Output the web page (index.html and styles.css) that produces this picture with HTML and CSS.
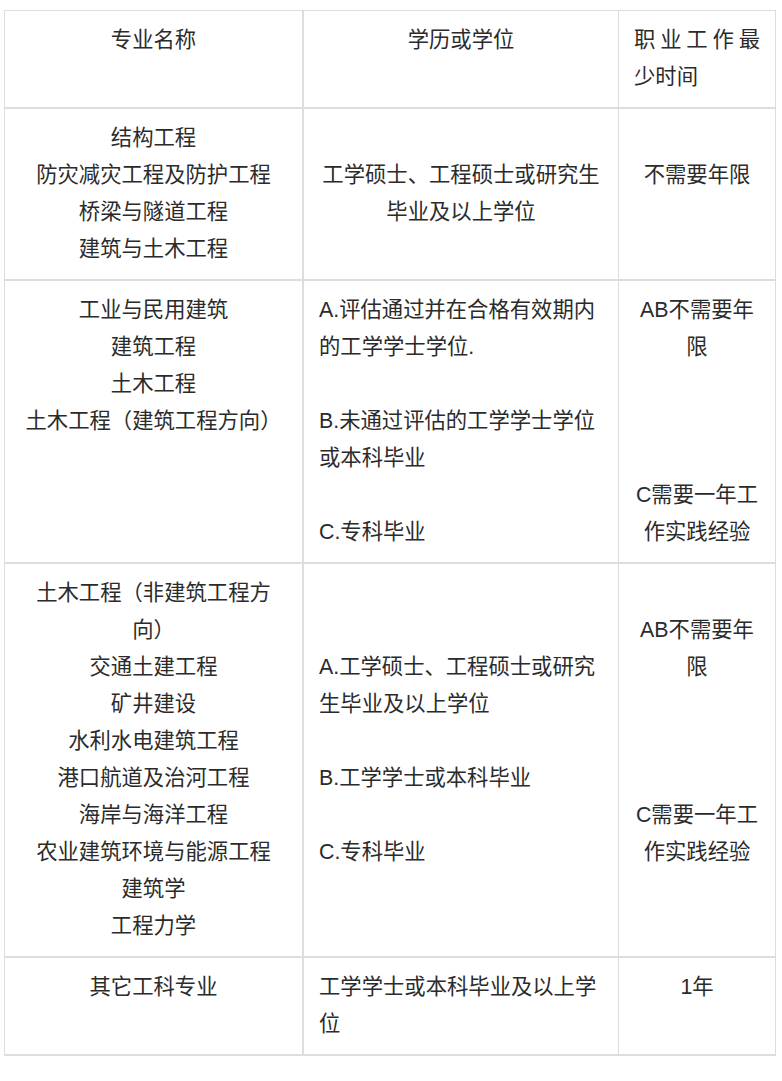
FILE: index.html
```html
<!DOCTYPE html>
<html lang="zh-CN">
<head>
<meta charset="utf-8">
<title>专业与学历要求</title>
<link rel="stylesheet" href="styles.css">
</head>
<body>
<table class="req">
  <colgroup>
    <col class="c1">
    <col class="c2">
    <col class="c3">
  </colgroup>
  <thead>
    <tr>
      <th class="h1">专业名称</th>
      <th class="h2">学历或学位</th>
      <th class="h3">职业工作最少时间</th>
    </tr>
  </thead>
  <tbody>
    <tr>
      <td class="major top">
        <div>结构工程</div>
        <div>防灾减灾工程及防护工程</div>
        <div>桥梁与隧道工程</div>
        <div>建筑与土木工程</div>
      </td>
      <td class="degree center">工学硕士、工程硕士或研究生毕业及以上学位</td>
      <td class="years">
        <div>不需要年限</div>
        <div class="blank"></div>
      </td>
    </tr>
    <tr>
      <td class="major top">
        <div>工业与民用建筑</div>
        <div>建筑工程</div>
        <div>土木工程</div>
        <div>土木工程（建筑工程方向）</div>
      </td>
      <td class="degree">
        <div>A.评估通过并在合格有效期内的工学学士学位.</div>
        <div class="blank"></div>
        <div>B.未通过评估的工学学士学位或本科毕业</div>
        <div class="blank"></div>
        <div>C.专科毕业</div>
      </td>
      <td class="years">
        <div>AB不需要年限</div>
        <div class="blank"></div>
        <div class="blank"></div>
        <div class="blank"></div>
        <div>C需要一年工作实践经验</div>
      </td>
    </tr>
    <tr>
      <td class="major">
        <div>土木工程（非建筑工程方<br>向）</div>
        <div>交通土建工程</div>
        <div>矿井建设</div>
        <div>水利水电建筑工程</div>
        <div>港口航道及治河工程</div>
        <div>海岸与海洋工程</div>
        <div>农业建筑环境与能源工程</div>
        <div>建筑学</div>
        <div>工程力学</div>
      </td>
      <td class="degree">
        <div>A.工学硕士、工程硕士或研究生毕业及以上学位</div>
        <div class="blank"></div>
        <div>B.工学学士或本科毕业</div>
        <div class="blank"></div>
        <div>C.专科毕业</div>
      </td>
      <td class="years">
        <div>AB不需要年限</div>
        <div class="blank"></div>
        <div class="blank"></div>
        <div class="blank"></div>
        <div>C需要一年工作实践经验</div>
        <div class="blank"></div>
      </td>
    </tr>
    <tr class="last">
      <td class="major top">其它工科专业</td>
      <td class="degree top">工学学士或本科毕业及以上学位</td>
      <td class="years top">1年</td>
    </tr>
  </tbody>
</table>
</body>
</html>
```

FILE: styles.css
```css
html, body {
  margin: 0;
  padding: 0;
  background: #ffffff;
}

body {
  padding: 10px 0 0 4px;
  font-family: "Liberation Sans", "Noto Sans CJK SC", sans-serif;
  font-size: 21.33px;
  line-height: 37px;
  color: #2b2b2b;
}

.req {
  table-layout: fixed;
  width: 772px;
  border-collapse: separate;
  border-spacing: 0;
  border-left: 1px solid #dddddd;
  border-top: 1px solid #dddddd;
}

.c1 { width: 299px; }
.c2 { width: 315px; }
.c3 { width: 157px; }

.req th,
.req td {
  padding: 11px 15px;
  border-bottom: 2px solid #dddddd;
  border-right: 1px solid #dddddd;
  vertical-align: middle;
  font-weight: normal;
  word-break: normal;
}

.req th {
  vertical-align: top;
  text-align: center;
}

.req .h1,
.req .major {
  border-right-width: 2px;
}

.req .h3 {
  text-align: justify;
}

.major {
  text-align: center;
}

.degree {
  text-align: left;
}

.degree.center {
  text-align: center;
}

.years {
  text-align: center;
}

.req td.top {
  vertical-align: top;
}

.blank {
  height: 37px;
}
```
